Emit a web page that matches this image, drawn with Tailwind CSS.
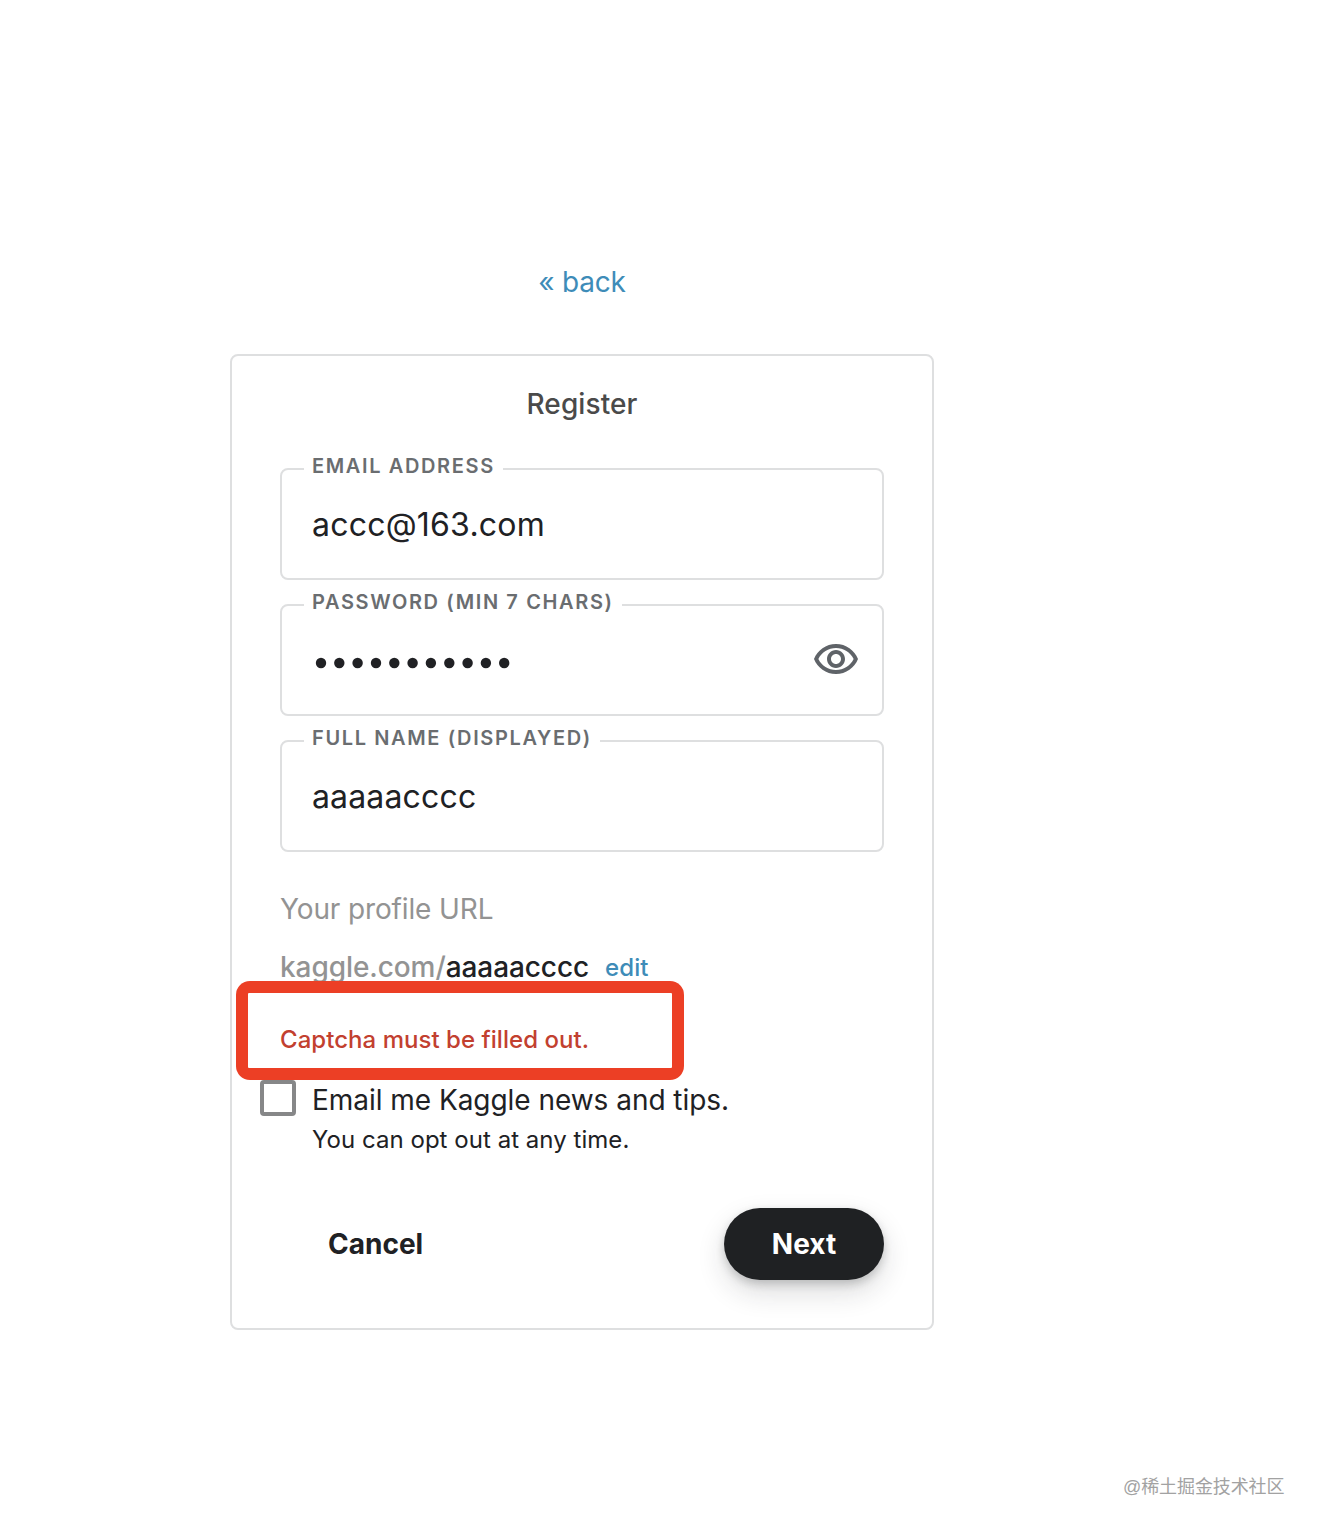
<!DOCTYPE html>
<html lang="en">
<head>
<meta charset="utf-8">
<title>Register</title>
<script src="https://cdn.jsdelivr.net/npm/@tailwindcss/browser@4"></script>
</head>
<body class="bg-white font-['Inter',sans-serif] text-[#202124] whitespace-nowrap">
<div class="relative flex h-[1534px] w-[1322px] flex-col overflow-hidden">
  <main class="ml-[230px] flex w-[704px] flex-col pt-[262px]">
    <a class="self-center text-[28px] leading-[40px] tracking-[-0.2px] text-[#3e8cb8]">« back</a>
    <section class="mt-[52px] flex h-[976px] flex-col rounded-lg border-2 border-[#dedfe0] px-12 pt-[28px]">
      <h1 class="self-center text-[28px] font-medium leading-[40px] tracking-[0.1px] text-[#4a4a4a]">Register</h1>
      <div class="mt-[34px] flex flex-col gap-[14px]">
        <fieldset class="h-[122px] rounded-lg border-2 border-[#dedfe0] px-[22px]">
          <legend class="px-2 pb-[6px] text-[20px] font-semibold leading-[16px] tracking-[1.63px] text-[#6a6d70]">EMAIL ADDRESS</legend>
          <div class="px-2 pt-[25px] text-[32px] leading-[40px] tracking-[0.22px]">accc@163.com</div>
        </fieldset>
        <fieldset class="h-[122px] rounded-lg border-2 border-[#dedfe0] px-[22px]">
          <legend class="px-2 pb-[6px] text-[20px] font-semibold leading-[16px] tracking-[1.63px] text-[#6a6d70]">PASSWORD (MIN 7 CHARS)</legend>
          <div class="flex items-start justify-between pl-[10px]">
            <svg class="mt-[37px] h-[20px] w-[200px]" viewBox="0 0 200 20" fill="#202124"><circle cx="7" cy="10" r="5.2"/><circle cx="25.3" cy="10" r="5.2"/><circle cx="43.6" cy="10" r="5.2"/><circle cx="62" cy="10" r="5.2"/><circle cx="80.3" cy="10" r="5.2"/><circle cx="98.6" cy="10" r="5.2"/><circle cx="116.9" cy="10" r="5.2"/><circle cx="135.3" cy="10" r="5.2"/><circle cx="153.6" cy="10" r="5.2"/><circle cx="171.9" cy="10" r="5.2"/><circle cx="190.2" cy="10" r="5.2"/></svg>
            <svg class="mt-5 size-12" viewBox="0 0 24 24" fill="#5f6368"><path d="M12 6c3.79 0 7.17 2.13 8.82 5.5C19.17 14.87 15.79 17 12 17s-7.17-2.13-8.82-5.5C4.83 8.13 8.21 6 12 6m0-2C7 4 2.73 7.11 1 11.5 2.73 15.89 7 19 12 19s9.27-3.11 11-7.5C21.27 7.11 17 4 12 4zm0 5c1.38 0 2.5 1.12 2.5 2.5S13.38 14 12 14s-2.5-1.12-2.5-2.5S10.62 9 12 9m0-2c-2.48 0-4.5 2.02-4.5 4.5S9.52 16 12 16s4.5-2.02 4.5-4.5S14.48 7 12 7z"/></svg>
          </div>
        </fieldset>
        <fieldset class="h-[122px] rounded-lg border-2 border-[#dedfe0] px-[22px]">
          <legend class="px-2 pb-[6px] text-[20px] font-semibold leading-[16px] tracking-[1.63px] text-[#6a6d70]">FULL NAME (DISPLAYED)</legend>
          <div class="px-2 pt-[25px] text-[32px] leading-[40px] tracking-[0.15px]">aaaaacccc</div>
        </fieldset>
      </div>
      <p class="mt-[37px] text-[28px] leading-[40px] tracking-[-0.13px] text-[#939393]">Your profile URL</p>
      <p class="mt-[18px] flex text-[28px] font-medium leading-[40px] tracking-[-0.08px]"><span class="text-[#939393]">kaggle.com/</span><span>aaaaacccc</span><a class="ml-4 pt-px text-[24px] tracking-[0.05px] text-[#3e8cb8]">edit</a></p>
      <div class="relative z-10 -ml-11 -mt-[7px] h-[99px] w-[448px] rounded-[14px] bg-[#ec3f25] p-3">
        <p class="h-[75px] rounded-[1px] bg-white pl-8 pt-[27px] text-[24px] font-medium leading-[40px] tracking-[0.04px] text-[#c2402f]">Captcha must be filled out.</p>
      </div>
      <div class="-ml-5 flex gap-4">
        <span class="size-9 rounded-[4px] border-4 border-[#868788]"></span>
        <div>
          <p class="text-[28px] leading-[40px] tracking-[-0.04px]">Email me Kaggle news and tips.</p>
          <p class="text-[24px] leading-[40px] tracking-[0.04px]">You can opt out at any time.</p>
        </div>
      </div>
      <div class="mt-[48px] flex items-center justify-between pl-12 text-[28px] font-bold leading-[40px]">
        <button>Cancel</button>
        <button class="h-[72px] w-40 rounded-full bg-[#1f2123] text-white shadow-[0_4px_8px_rgba(32,33,36,0.2),0_12px_28px_rgba(32,33,36,0.16)]">Next</button>
      </div>
    </section>
  </main>
  <p class="absolute left-[1123px] top-[1472px] font-['Noto_Sans_CJK_SC',sans-serif] text-[18px] leading-[26px] tracking-[-0.1px] text-[#a2a2a2]"><span class="font-['Liberation_Sans',sans-serif]">@</span>稀土掘金技术社区</p>
</div>
</body>
</html>
